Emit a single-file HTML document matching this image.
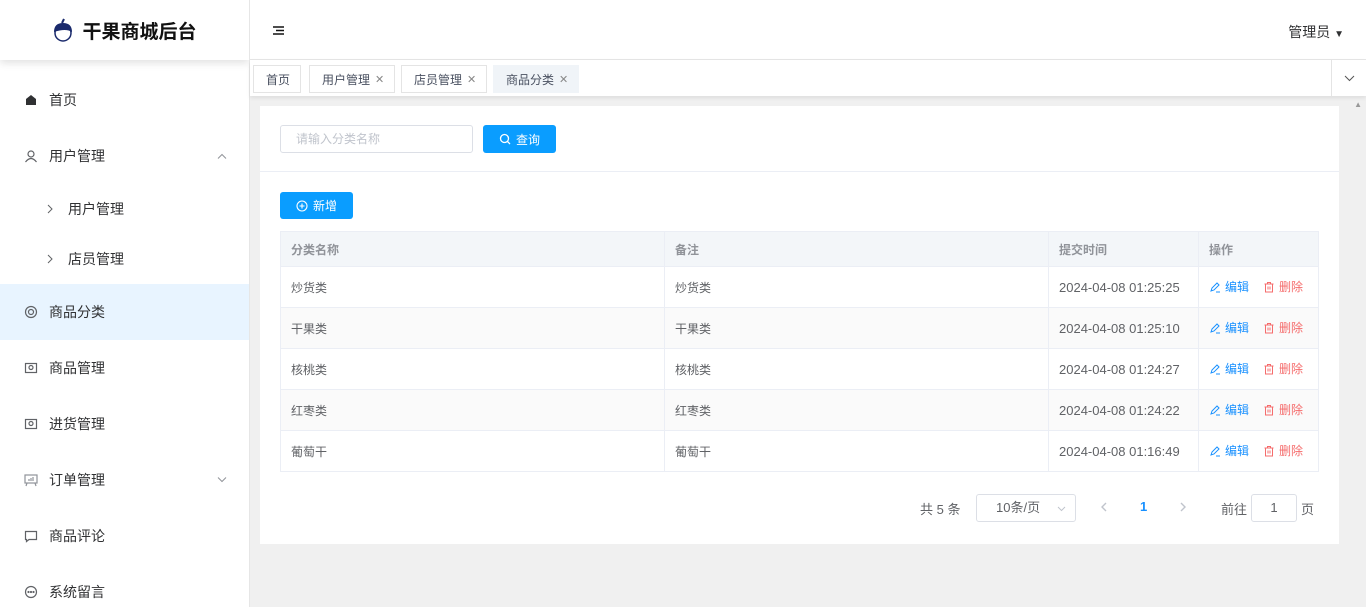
<!DOCTYPE html><html><head><meta charset="utf-8"><style>
*{box-sizing:border-box;margin:0;padding:0}
html,body{width:1366px;height:607px;overflow:hidden}
body{font-family:"Liberation Sans","Noto Sans CJK SC",sans-serif;background:#f0f0f0;position:relative;font-size:14px;color:#303133}
.side{position:absolute;left:0;top:0;width:250px;height:607px;background:#fff;border-right:1px solid #e6e6e6;overflow:hidden}
.logo{height:60px;display:flex;align-items:center;justify-content:center;box-shadow:0 3px 8px rgba(0,0,0,.12);font-size:19px;font-weight:bold;color:#111;position:relative;z-index:2}
.mi{position:absolute;left:0;width:249px;height:56px;display:flex;align-items:center;padding-left:24px;font-size:14px;color:#303133}
.mi .ic{width:14px;height:14px;margin-right:11px;display:inline-block}
.sub{padding-left:46px}
.hdr{position:absolute;left:250px;top:0;right:0;height:60px;background:#fff;border-bottom:1px solid #e6e6e6}
.tabs{position:absolute;left:250px;top:60px;right:0;height:36px;background:#fff;box-shadow:0 2px 4px rgba(0,0,0,.08)}
.tab{position:absolute;top:5px;height:28px;border:1px solid #e4e4e4;font-size:12px;color:#495060;display:flex;align-items:center;padding:0 10px 0 12px}
.tab .x{margin-left:5px;color:#888;font-size:11px}
.card{position:absolute;left:260px;top:106px;width:1079px;height:438px;background:#fff}
table{border-collapse:collapse;position:absolute;left:20px;top:125px;width:1039px;font-size:12px}
td,th{border:1px solid #ebeef5;height:41px;padding-left:10px;text-align:left;color:#606266;font-weight:normal}
td:nth-child(3){font-size:13px}
th{height:35px;background:#f3f6f9;color:#909399;font-weight:bold}
tr:nth-child(odd) td{background:#fafafa}
.ed{color:#1890ff;display:inline-flex;align-items:center}.de{color:#f56c6c;margin-left:14px;display:inline-flex;align-items:center}
.ed svg,.de svg{margin-right:4px}
.btn{position:absolute;background:#0a9dff;color:#fff;font-size:12px;border-radius:3px;display:flex;align-items:center;justify-content:center}
</style></head><body>
<div class="side">
<div class="logo"><svg width="22" height="24" viewBox="0 0 22 24" style="margin-right:8px"><circle cx="11" cy="15" r="8" fill="#fff" stroke="#1a2a6c" stroke-width="1.5"/><path d="M2 14 Q2 5 11 5 Q20 5 20 14 Q14 10 2 14Z" fill="#1a2a6c"/><path d="M10 5 L12 1" stroke="#1a2a6c" stroke-width="2"/></svg>干果商城后台</div>
<div class="mi" style="top:72px"><svg class="ic" viewBox="0 0 14 14"><path d="M2 6 L7 2 L12 6 V12 H2Z" fill="#303133"/></svg>首页</div>
<div class="mi" style="top:128px"><svg class="ic" viewBox="0 0 14 14" fill="none" stroke="#606266" stroke-width="1.2"><circle cx="7" cy="5" r="3"/><path d="M1.5 13 Q7 6 12.5 13"/></svg>用户管理<svg style="position:absolute;right:22px" width="10" height="6" viewBox="0 0 10 6" fill="none" stroke="#909399"><path d="M1 5.5 L5 1.5 L9 5.5"/></svg></div>
<div class="mi sub" style="top:181px"><svg width="8" height="10" viewBox="0 0 8 10" fill="none" stroke="#606266" style="margin-right:14px"><path d="M2 1 L6 5 L2 9"/></svg>用户管理</div>
<div class="mi sub" style="top:231px"><svg width="8" height="10" viewBox="0 0 8 10" fill="none" stroke="#606266" style="margin-right:14px"><path d="M2 1 L6 5 L2 9"/></svg>店员管理</div>
<div class="mi" style="top:284px;background:#e8f4ff"><svg class="ic" viewBox="0 0 14 14" fill="none" stroke="#606266" stroke-width="1.2"><circle cx="7" cy="7" r="5.5"/><circle cx="7" cy="7" r="2.5"/></svg>商品分类</div>
<div class="mi" style="top:340px"><svg class="ic" viewBox="0 0 14 14" fill="none" stroke="#606266" stroke-width="1.2"><rect x="1.5" y="2.5" width="11" height="9"/><circle cx="7" cy="6.5" r="2"/></svg>商品管理</div>
<div class="mi" style="top:396px"><svg class="ic" viewBox="0 0 14 14" fill="none" stroke="#606266" stroke-width="1.2"><rect x="1.5" y="2.5" width="11" height="9"/><circle cx="7" cy="6.5" r="2"/></svg>进货管理</div>
<div class="mi" style="top:452px"><svg class="ic" viewBox="0 0 14 14" fill="none" stroke="#909399" stroke-width="1.2"><rect x="1" y="2" width="12" height="8"/><path d="M3 10 L2 13 M11 10 L12 13 M5 8 V6 M7 8 V5 M9 8 V4"/></svg>订单管理<svg style="position:absolute;right:22px" width="10" height="6" viewBox="0 0 10 6" fill="none" stroke="#909399"><path d="M1 0.5 L5 4.5 L9 0.5"/></svg></div>
<div class="mi" style="top:508px"><svg class="ic" viewBox="0 0 14 14" fill="none" stroke="#606266" stroke-width="1.2"><path d="M1.5 2.5 H12.5 V10.5 H5 L2.5 12.5 V10.5 H1.5Z"/></svg>商品评论</div>
<div class="mi" style="top:564px"><svg class="ic" viewBox="0 0 14 14" fill="none" stroke="#606266" stroke-width="1.2"><circle cx="7" cy="7" r="5.5"/><circle cx="4.5" cy="7" r=".5"/><circle cx="7" cy="7" r=".5"/><circle cx="9.5" cy="7" r=".5"/></svg>系统留言</div>
</div>
<div class="hdr"><svg style="position:absolute;left:23px;top:26px" width="11" height="9" viewBox="0 0 11 9" stroke="#111" stroke-width="1.6"><path d="M0 1 H11 M3 4.5 H11 M0 8 H11"/></svg><span style="position:absolute;right:22px;top:22px;font-size:14px;color:#303133">管理员 <span style="font-size:10px">▼</span></span></div>
<div class="tabs">
<div class="tab" style="left:3px">首页</div>
<div class="tab" style="left:59px">用户管理<span class="x">✕</span></div>
<div class="tab" style="left:151px">店员管理<span class="x">✕</span></div>
<div class="tab" style="left:243px;background:#f0f4f8;border-color:#f0f4f8">商品分类<span class="x">✕</span></div>
<div style="position:absolute;right:0;top:0;width:35px;height:36px;border-left:1px solid #e4e4e4;display:flex;align-items:center;justify-content:center"><svg width="11" height="7" viewBox="0 0 11 7" fill="none" stroke="#555"><path d="M1 1 L5.5 5.5 L10 1"/></svg></div>
</div>
<div style="position:absolute;right:4px;top:100px;font-size:8px;color:#999">▲</div>
<div class="card">
<div style="position:absolute;left:20px;top:19px;width:193px;height:28px;border:1px solid #dcdfe6;border-radius:3px;font-size:12px;color:#c0c4cc;padding-left:15px;line-height:26px">请输入分类名称</div>
<div class="btn" style="left:223px;top:19px;width:73px;height:28px"><svg width="12" height="12" viewBox="0 0 12 12" fill="none" stroke="#fff" stroke-width="1.3" style="margin-right:5px"><circle cx="5.5" cy="5.5" r="4"/><path d="M8.5 8.5 L11 11"/></svg>查询</div>
<div style="position:absolute;left:0;right:0;top:65px;border-top:1px solid #ebeef5"></div>
<div class="btn" style="left:20px;top:86px;width:73px;height:27px"><svg width="12" height="12" viewBox="0 0 12 12" fill="none" stroke="#fff" stroke-width="1.1" style="margin-right:5px"><circle cx="6" cy="6" r="5"/><path d="M6 3.5 V8.5 M3.5 6 H8.5"/></svg>新增</div>
<table>
<tr><th style="width:384px">分类名称</th><th style="width:384px">备注</th><th style="width:150px">提交时间</th><th>操作</th></tr>
<tr><td>炒货类</td><td>炒货类</td><td>2024-04-08 01:25:25</td><td><span class="ed"><svg width="12" height="12" viewBox="0 0 12 12" fill="none" stroke="#1890ff"><path d="M2 10 L3 7 L8 2 L10 4 L5 9Z M7 11 H11"/></svg>编辑</span><span class="de"><svg width="12" height="12" viewBox="0 0 12 12" fill="none" stroke="#f56c6c"><path d="M1.5 3 H10.5 M4.5 3 V1.5 H7.5 V3 M2.5 3 V11 H9.5 V3 M5 5.5 V8.5 M7 5.5 V8.5"/></svg>删除</span></td></tr>
<tr><td>干果类</td><td>干果类</td><td>2024-04-08 01:25:10</td><td><span class="ed"><svg width="12" height="12" viewBox="0 0 12 12" fill="none" stroke="#1890ff"><path d="M2 10 L3 7 L8 2 L10 4 L5 9Z M7 11 H11"/></svg>编辑</span><span class="de"><svg width="12" height="12" viewBox="0 0 12 12" fill="none" stroke="#f56c6c"><path d="M1.5 3 H10.5 M4.5 3 V1.5 H7.5 V3 M2.5 3 V11 H9.5 V3 M5 5.5 V8.5 M7 5.5 V8.5"/></svg>删除</span></td></tr>
<tr><td>核桃类</td><td>核桃类</td><td>2024-04-08 01:24:27</td><td><span class="ed"><svg width="12" height="12" viewBox="0 0 12 12" fill="none" stroke="#1890ff"><path d="M2 10 L3 7 L8 2 L10 4 L5 9Z M7 11 H11"/></svg>编辑</span><span class="de"><svg width="12" height="12" viewBox="0 0 12 12" fill="none" stroke="#f56c6c"><path d="M1.5 3 H10.5 M4.5 3 V1.5 H7.5 V3 M2.5 3 V11 H9.5 V3 M5 5.5 V8.5 M7 5.5 V8.5"/></svg>删除</span></td></tr>
<tr><td>红枣类</td><td>红枣类</td><td>2024-04-08 01:24:22</td><td><span class="ed"><svg width="12" height="12" viewBox="0 0 12 12" fill="none" stroke="#1890ff"><path d="M2 10 L3 7 L8 2 L10 4 L5 9Z M7 11 H11"/></svg>编辑</span><span class="de"><svg width="12" height="12" viewBox="0 0 12 12" fill="none" stroke="#f56c6c"><path d="M1.5 3 H10.5 M4.5 3 V1.5 H7.5 V3 M2.5 3 V11 H9.5 V3 M5 5.5 V8.5 M7 5.5 V8.5"/></svg>删除</span></td></tr>
<tr><td>葡萄干</td><td>葡萄干</td><td>2024-04-08 01:16:49</td><td><span class="ed"><svg width="12" height="12" viewBox="0 0 12 12" fill="none" stroke="#1890ff"><path d="M2 10 L3 7 L8 2 L10 4 L5 9Z M7 11 H11"/></svg>编辑</span><span class="de"><svg width="12" height="12" viewBox="0 0 12 12" fill="none" stroke="#f56c6c"><path d="M1.5 3 H10.5 M4.5 3 V1.5 H7.5 V3 M2.5 3 V11 H9.5 V3 M5 5.5 V8.5 M7 5.5 V8.5"/></svg>删除</span></td></tr>
</table>
<div style="position:absolute;left:660px;top:393px;font-size:13px;color:#606266">共 5 条</div>
<div style="position:absolute;left:716px;top:388px;width:100px;height:28px;border:1px solid #dcdfe6;border-radius:3px;font-size:13px;color:#606266;padding-left:19px;line-height:26px">10条/页<svg style="position:absolute;right:9px;top:11px" width="9" height="6" viewBox="0 0 9 6" fill="none" stroke="#c0c4cc"><path d="M1 1 L4.5 4.5 L8 1"/></svg></div>
<svg style="position:absolute;left:841px;top:396px" width="6" height="10" viewBox="0 0 6 10" fill="none" stroke="#c0c4cc" stroke-width="1.4"><path d="M5 1 L1 5 L5 9"/></svg>
<div style="position:absolute;left:880px;top:393px;color:#1890ff;font-weight:bold;font-size:13px">1</div>
<svg style="position:absolute;left:920px;top:396px" width="6" height="10" viewBox="0 0 6 10" fill="none" stroke="#c0c4cc" stroke-width="1.4"><path d="M1 1 L5 5 L1 9"/></svg>
<div style="position:absolute;left:961px;top:393px;font-size:13px;color:#606266">前往</div>
<div style="position:absolute;left:991px;top:388px;width:46px;height:28px;border:1px solid #dcdfe6;border-radius:3px;text-align:center;line-height:26px;font-size:13px;color:#606266">1</div>
<div style="position:absolute;left:1041px;top:393px;font-size:13px;color:#606266">页</div>
</div>
</body></html>
